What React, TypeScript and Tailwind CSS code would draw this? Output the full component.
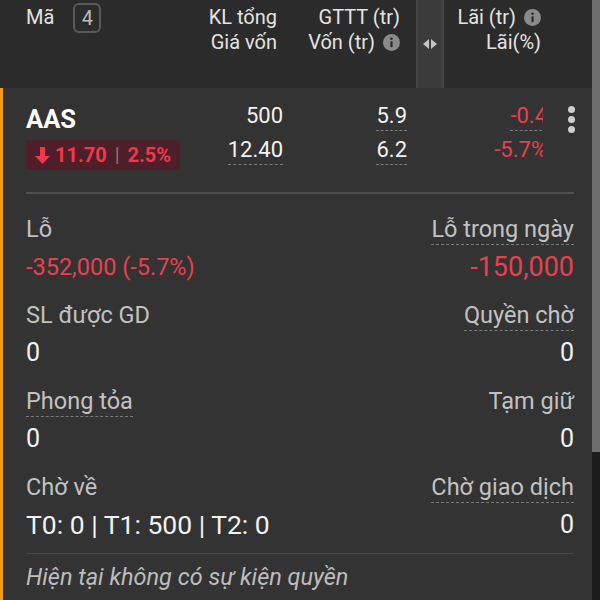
import React from "react";

function InfoIcon() {
  return (
    <svg width="17" height="17" viewBox="0 0 17 17" className="shrink-0">
      <circle cx="8.5" cy="8.5" r="8.5" fill="#8a8a8a" />
      <circle cx="8.5" cy="4.8" r="1.3" fill="#2b2b2b" />
      <rect x="7.4" y="7.2" width="2.2" height="6" rx="0.6" fill="#2b2b2b" />
    </svg>
  );
}

function ResizeIcon() {
  return (
    <svg width="14" height="10" viewBox="0 0 14 10">
      <polygon points="6,0 6,10 0,5" fill="#c4c4c4" />
      <polygon points="8,0 8,10 14,5" fill="#c4c4c4" />
    </svg>
  );
}

function DownArrow() {
  return (
    <svg width="15" height="17" viewBox="0 0 15 17" className="shrink-0">
      <path d="M5 0h5v9h5l-7.5 8L0 9h5z" fill="#f0384b" />
    </svg>
  );
}

function Item({
  label,
  value,
  right,
  dashed,
  valueClass,
}: {
  label: string;
  value: string;
  right?: boolean;
  dashed?: boolean;
  valueClass?: string;
}) {
  return (
    <div className={"flex flex-col " + (right ? "items-end" : "items-start")}>
      <div
        className={
          "h-[30px] leading-[29px] text-[23.5px] text-[#c2c2c2] " +
          (dashed ? "border-b border-dashed border-[#7a7a7a]" : "")
        }
      >
        {label}
      </div>
      <div className={"mt-[6px] h-[32px] leading-[32px] whitespace-nowrap " + (valueClass ?? "text-[25px] text-[#f2f2f2]")}>
        {value}
      </div>
    </div>
  );
}

export default function App() {
  return (
    <div className="w-[600px] h-[600px] flex overflow-hidden bg-[#333333] font-[Roboto,sans-serif]">
      <div className="flex-1 flex flex-col min-w-0">
        {/* Header */}
        <div className="h-[88px] shrink-0 bg-[#2b2b2b] flex text-[20px] leading-[25px] text-[#e4e4e4]">
          <div className="w-[160px] pl-[26px] pt-[5px] flex items-start">
            <span>Mã</span>
            <span className="ml-[19px] -mt-[2px] w-[28px] h-[30px] border-2 border-[#5a5a5a] rounded-[6px] flex items-center justify-center text-[#bdbdbd]">
              4
            </span>
          </div>
          <div className="w-[117px] pt-[5px] flex flex-col items-end">
            <span>KL tổng</span>
            <span>Giá vốn</span>
          </div>
          <div className="w-[123px] pt-[5px] flex flex-col items-end">
            <span>GTTT (tr)</span>
            <span className="flex items-center gap-[8px]">
              Vốn (tr) <InfoIcon />
            </span>
          </div>
          <div className="w-[16px]" />
          <div className="w-[28px] h-full bg-[#3b3b3b] border-x-2 border-[#454545] flex items-center justify-center">
            <ResizeIcon />
          </div>
          <div className="w-[97px] pt-[5px] flex flex-col items-end">
            <span className="flex items-center gap-[8px]">
              Lãi (tr) <InfoIcon />
            </span>
            <span>Lãi(%)</span>
          </div>
          <div className="flex-1" />
        </div>

        {/* Body */}
        <div className="flex-1 border-l-[3px] border-[#f39c12] pl-[23px] pr-[18px] flex flex-col">
          {/* Row */}
          <div className="h-[106px] shrink-0 border-b-2 border-[#4f4f4f] pt-[14px] flex">
            <div className="w-[160px] flex flex-col items-start">
              <div className="mt-[2px] h-[30px] leading-[30px] text-[25.5px] font-bold text-white">AAS</div>
              <div className="mt-[6px] h-[30px] px-[9px] bg-[#4e1f29] rounded-[3px] flex items-center text-[20px] font-bold text-[#f0384b]">
                <DownArrow />
                <span className="ml-[5px]">11.70</span>
                <span className="mx-[8px] font-normal text-[#9a6a72]">|</span>
                <span>2.5%</span>
              </div>
            </div>
            <div className="w-[97px] flex flex-col items-end gap-[5px] text-[22px] text-[#f2f2f2]">
              <div className="h-[29px] leading-[28px] border-b border-transparent">500</div>
              <div className="h-[29px] leading-[28px] border-b border-dashed border-[#7a7a7a]">12.40</div>
            </div>
            <div className="w-[124px] flex flex-col items-end gap-[5px] text-[22px] text-[#f2f2f2]">
              <div className="h-[29px] leading-[28px] border-b border-dashed border-[#7a7a7a]">5.9</div>
              <div className="h-[29px] leading-[28px] border-b border-dashed border-[#7a7a7a]">6.2</div>
            </div>
            <div className="w-[136px] overflow-hidden">
              <div className="w-[140px] flex flex-col items-end gap-[5px] text-[22px] text-[#e8404f]">
                <div className="h-[29px] leading-[28px] border-b border-dashed border-[#7a7a7a]">-0.4</div>
                <div className="h-[29px] leading-[28px] border-b border-transparent">-5.7%</div>
              </div>
            </div>
            <div className="flex-1 flex flex-col items-end gap-[3px] pt-[4px] -mr-[1px]">
              <div className="w-[7px] h-[7px] rounded-full bg-[#cfcfcf]" />
              <div className="w-[7px] h-[7px] rounded-full bg-[#cfcfcf]" />
              <div className="w-[7px] h-[7px] rounded-full bg-[#cfcfcf]" />
            </div>
          </div>

          {/* Details */}
          <div className="pt-[21px] grid grid-cols-2 gap-y-[18px] border-b border-[#4a4a4a] pb-[12px]">
            <Item label="Lỗ" value="-352,000 (-5.7%)" valueClass="text-[23.5px] text-[#e8404f]" />
            <Item label="Lỗ trong ngày" value="-150,000" right dashed valueClass="text-[27px] text-[#e8404f]" />
            <Item label="SL được GD" value="0" />
            <Item label="Quyền chờ" value="0" right dashed />
            <Item label="Phong tỏa" value="0" dashed />
            <Item label="Tạm giữ" value="0" right />
            <Item label="Chờ về" value="T0: 0 | T1: 500 | T2: 0" valueClass="text-[26.5px] text-[#f2f2f2]" />
            <Item label="Chờ giao dịch" value="0" right dashed />
          </div>
          <div className="pt-[8px] leading-[30px] text-[23.5px] italic text-[#bdbdbd]">
            Hiện tại không có sự kiện quyền
          </div>
        </div>
      </div>
      {/* Scrollbar */}
      <div className="w-[8px] shrink-0 flex flex-col">
        <div className="h-[452px] bg-[#6e6e6e]" />
        <div className="flex-1 bg-[#1b1b1b]" />
      </div>
    </div>
  );
}
